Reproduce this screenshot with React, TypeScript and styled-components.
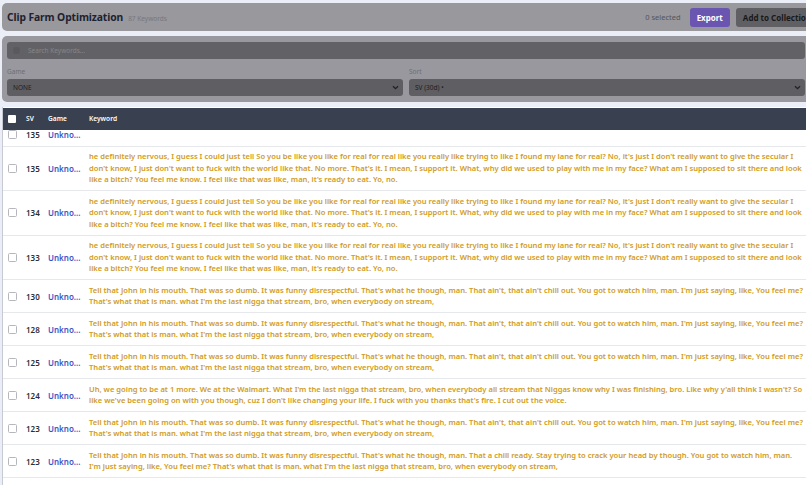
import React, { useLayoutEffect, useRef } from 'react'
import styled, { createGlobalStyle } from 'styled-components'

const GlobalStyle = createGlobalStyle`
  html, body {
    margin: 0;
    padding: 0;
    height: 100%;
    overflow: hidden;
    background: #eceef7;
    font-family: 'Noto Sans', 'Open Sans', sans-serif;
  }
  #root {
    height: 100%;
  }
`

const TELL =
  "Tell that John in his mouth. That was so dumb. It was funny disrespectful. That's what he though, man. That ain't, that ain't chill out. You got to watch him, man. I'm just saying, like, You feel me? That's what that is man. what I'm the last nigga that stream, bro, when everybody on stream,"

const NERVOUS =
  "he definitely nervous, I guess I could just tell So you be like you like for real for real like you really like trying to like I found my lane for real? No, it's just I don't really want to give the secular I don't know, I just don't want to fuck with the world like that. No more. That's it. I mean, I support it. What, why did we used to play with me in my face? What am I supposed to sit there and look like a bitch? You feel me know. I feel like that was like, man, it's ready to eat. Yo, no."

const WALMART =
  "Uh, we going to be at 1 more. We at the Walmart. What I'm the last nigga that stream, bro, when everybody all stream that Niggas know why I was finishing, bro. Like why y'all think I wasn't? So like we've been going on with you though, cuz I don't like changing your life. I fuck with you thanks that's fire. I cut out the voice."

const CHILL =
  "Tell that John in his mouth. That was so dumb. It was funny disrespectful. That's what he though, man. That a chill ready. Stay trying to crack your head by though. You got to watch him, man. I'm just saying, like, You feel me? That's what that is man. what I'm the last nigga that stream, bro, when everybody on stream,"

const rows = [
  { sv: 135, keyword: '' },
  { sv: 135, keyword: NERVOUS },
  { sv: 134, keyword: NERVOUS },
  { sv: 133, keyword: NERVOUS },
  { sv: 130, keyword: TELL },
  { sv: 128, keyword: TELL },
  { sv: 125, keyword: TELL },
  { sv: 124, keyword: WALMART },
  { sv: 123, keyword: TELL },
  { sv: 123, keyword: CHILL },
  { sv: 122, keyword: TELL },
]

export default function App() {
  const scrollRef = useRef<HTMLDivElement>(null)

  // the list is scrolled a little, so the first row sits under the sticky header
  useLayoutEffect(() => {
    if (scrollRef.current) scrollRef.current.scrollTop = 7
  }, [])

  return (
    <Page>
      <GlobalStyle />
      <TopBar>
        <TitleGroup>
          <Title>Clip Farm Optimization</Title>
          <Count>87 Keywords</Count>
        </TitleGroup>
        <Actions>
          <Selected>0 selected</Selected>
          <Button variant="primary">Export</Button>
          <Button variant="muted">Add to Collection</Button>
        </Actions>
      </TopBar>

      <Filters>
        <SearchBox>
          <SearchIcon viewBox="0 0 10 10">
            <rect x="0.5" y="0.5" width="9" height="9" rx="1.5" fill="#5a5a5e" />
          </SearchIcon>
          <SearchInput placeholder="Search Keywords..." />
        </SearchBox>
        <FilterGrid>
          <Field>
            <Label>Game</Label>
            <Select>
              <span>NONE</span>
              <Chevron />
            </Select>
          </Field>
          <Field>
            <Label>Sort</Label>
            <Select>
              <span>SV (30d) •</span>
              <Chevron />
            </Select>
          </Field>
        </FilterGrid>
      </Filters>

      <TableWrap ref={scrollRef}>
        <Table>
          <colgroup>
            <col style={{ width: 19 }} />
            <col style={{ width: 22 }} />
            <col style={{ width: 41 }} />
            <col />
          </colgroup>
          <thead>
            <tr>
              <HeadCell>
                <HeadCheck />
              </HeadCell>
              <HeadCell>SV</HeadCell>
              <HeadCell>Game</HeadCell>
              <HeadCell>Keyword</HeadCell>
            </tr>
          </thead>
          <tbody>
            {rows.map((r, i) => (
              <Row key={i} empty={!r.keyword}>
                <Cell>
                  <RowCheck />
                </Cell>
                <SvCell>{r.sv}</SvCell>
                <GameCell>Unkno...</GameCell>
                <KeywordCell>{r.keyword}</KeywordCell>
              </Row>
            ))}
          </tbody>
        </Table>
      </TableWrap>
    </Page>
  )
}

function Chevron() {
  return (
    <svg width="7" height="5" viewBox="0 0 7 5">
      <path d="M1 1.2 L3.5 3.7 L6 1.2" stroke="#222" strokeWidth="1.3" fill="none" />
    </svg>
  )
}

///////////////////////////////////////////////////////////////////////////////////

const Page = styled.div`
  width: 810px;
  height: 100%;
  padding: 1px 0 0 2px;
  box-sizing: border-box;
  display: flex;
  flex-direction: column;
`

const TopBar = styled.header`
  height: 28px;
  background: #98989d;
  border-radius: 5px;
  display: flex;
  align-items: center;
  justify-content: space-between;
  padding: 0 0 0 5px;
  margin: 2px -8px 0 0;
`

const TitleGroup = styled.div`
  display: flex;
  align-items: baseline;
  gap: 5px;
`

const Title = styled.h1`
  margin: 0;
  font-size: 10.3px;
  font-weight: 700;
  color: #1d2230;
  letter-spacing: -0.1px;
`

const Count = styled.span`
  font-size: 6.5px;
  color: #77777d;
`

const Actions = styled.div`
  display: flex;
  align-items: center;
  gap: 6px;
`

const Selected = styled.span`
  font-size: 7.5px;
  color: #55555b;
  margin-right: 3px;
`

const Button = styled.button<{ variant: 'primary' | 'muted' }>`
  border: none;
  height: 19px;
  border-radius: 3px;
  padding: 0 7px;
  font-family: inherit;
  font-size: 8px;
  font-weight: 700;
  background: ${(p) => (p.variant === 'primary' ? '#6a56b1' : '#606064')};
  color: ${(p) => (p.variant === 'primary' ? '#ffffff' : '#18181b')};
`

const Filters = styled.section`
  margin-top: 5px;
  background: #98989e;
  border-radius: 5px;
  padding: 6px 5px 6px 5px;
  display: flex;
  flex-direction: column;
`

const SearchBox = styled.div`
  height: 17px;
  background: #626266;
  border-radius: 3px;
  display: flex;
  align-items: center;
  padding-left: 6px;
  gap: 6px;
`

const SearchIcon = styled.svg`
  width: 7px;
  height: 7px;
`

const SearchInput = styled.input`
  border: none;
  background: transparent;
  font-family: inherit;
  font-size: 6.5px;
  color: #8c8c92;
  outline: none;
  flex: 1;
  &::placeholder {
    color: #85858b;
  }
`

const FilterGrid = styled.div`
  display: grid;
  grid-template-columns: 1fr 1fr;
  gap: 6px;
  margin-top: 8px;
`

const Field = styled.div`
  display: flex;
  flex-direction: column;
  gap: 3px;
`

const Label = styled.label`
  font-size: 6.5px;
  color: #6e6e74;
`

const Select = styled.div`
  height: 17px;
  background: #5f5f63;
  border-radius: 3px;
  display: flex;
  align-items: center;
  justify-content: space-between;
  padding: 0 4px 0 6px;
  font-size: 6.5px;
  color: #1c1c1f;
`

const TableWrap = styled.div`
  margin: 5px -3px 0 0;
  flex: 1;
  min-height: 0;
  overflow: hidden;
  background: #ffffff;
  border-left: 1px solid #c7c9d3;
`

const Table = styled.table`
  width: 100%;
  border-collapse: collapse;
  table-layout: fixed;
`

const HeadCell = styled.th`
  position: sticky;
  top: 0;
  z-index: 1;
  height: 22px;
  padding: 0 4px;
  background: #394150;
  color: #ffffff;
  font-size: 6.6px;
  font-weight: 600;
  text-align: left;
  border-top: 1px solid #8d8f96;
  &:first-child {
    padding-left: 5px;
  }
`

const HeadCheck = styled.span`
  display: block;
  width: 8px;
  height: 8px;
  background: #ffffff;
  border-radius: 1px;
`

const Row = styled.tr<{ empty?: boolean }>`
  height: ${(p) => (p.empty ? '23px' : 'auto')};
  border-bottom: 1px solid #e7e8ec;
`

const Cell = styled.td`
  padding: 4.5px 4px 4.5px 5px;
  vertical-align: middle;
`

const RowCheck = styled.span`
  display: block;
  width: 7px;
  height: 7px;
  border: 1px solid #b5b7bd;
  border-radius: 1.5px;
  background: #ffffff;
`

const SvCell = styled(Cell)`
  padding-left: 4px;
  font-size: 8px;
  font-weight: 600;
  color: #2c2f36;
`

const GameCell = styled(Cell)`
  padding-left: 4px;
  font-size: 8px;
  font-weight: 600;
  color: #3a55c8;
  white-space: nowrap;
`

const KeywordCell = styled(Cell)`
  padding: 4.5px 8px 4.5px 4px;
  font-size: 7.6px;
  line-height: 11.5px;
  font-weight: 600;
  color: #d09b24;
`
